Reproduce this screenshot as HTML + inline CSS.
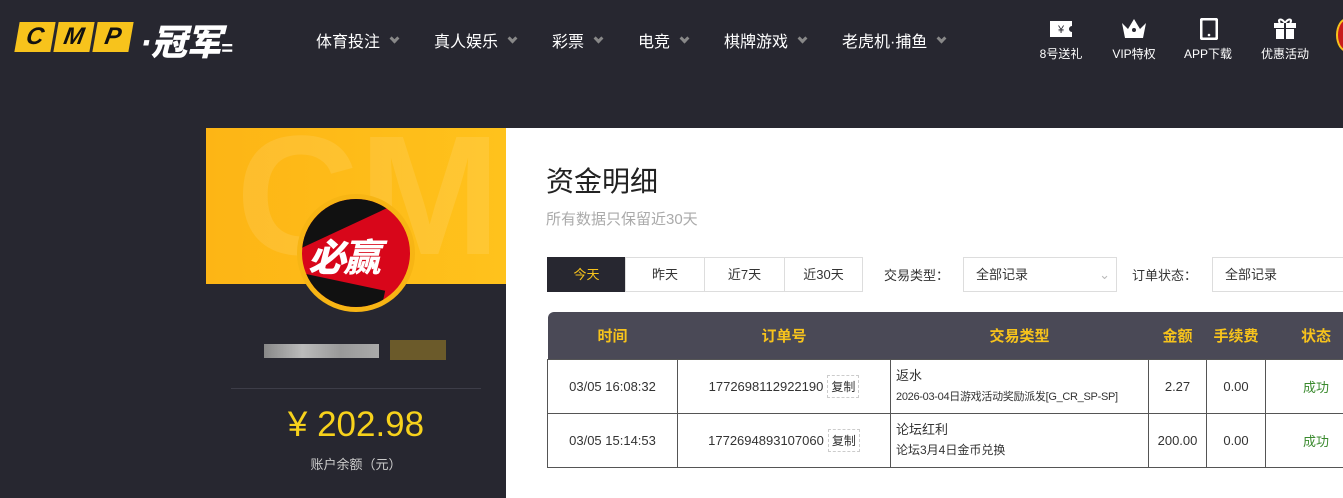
<!DOCTYPE html>
<html><head><meta charset="utf-8"><style>
*{margin:0;padding:0;box-sizing:border-box}
body{width:1343px;height:492px;overflow:hidden;background:#272730;font-family:"Liberation Sans","Noto Sans CJK SC",sans-serif;position:relative}
.abs{position:absolute}
.nav{color:#fff;font-size:16px;top:28px}
.nav i{display:inline-block;width:7px;height:7px;border-right:3px solid #888;border-bottom:3px solid #888;transform:rotate(45deg);margin-left:11px;vertical-align:5px}
.ic{color:#fff;font-size:12px;top:45px;width:70px;text-align:center}
.logo b{display:inline-block;width:36px;height:30px;background:#f7c31c;color:#111;font:italic 900 24px "Liberation Sans",sans-serif;text-align:center;line-height:30px;transform:skewX(-10deg);margin-right:3px}
.btn{top:257px;height:35px;border:1px solid #ddd;font-size:13px;text-align:center;line-height:33px;color:#333;background:#fff}
.sel{top:257px;height:35px;border:1px solid #ddd;font-size:13px;line-height:33px;padding-left:12px;color:#333}
table{border-collapse:collapse;position:absolute;left:547px;top:312px;width:820px;font-size:13px;color:#333;table-layout:fixed}
th{background:#4a4956;color:#f7c31c;font-size:15px;height:47px;font-weight:bold}
td{border:1px solid #555;height:54px;text-align:center;background:#fff;white-space:nowrap;overflow:hidden}
td.l{text-align:left;padding-left:5px;line-height:20px}
.cp{display:inline-block;border:1px dashed #ccc;padding:2px 3px;margin-left:4px;font-size:12px}
.ok{color:#3a8a2e}
</style></head><body>
<div class="abs logo" style="left:17px;top:22px"><b>C</b><b>M</b><b>P</b></div>
<div class="abs" style="left:140px;top:14px;color:#fff;font:italic 900 36px 'Liberation Sans','Noto Sans CJK SC',sans-serif;letter-spacing:-1px">·冠军<span style="font-size:20px">=</span></div>
<div class="abs nav" style="left:316px">体育投注<i></i></div>
<div class="abs nav" style="left:434px">真人娱乐<i></i></div>
<div class="abs nav" style="left:552px">彩票<i></i></div>
<div class="abs nav" style="left:638px">电竞<i></i></div>
<div class="abs nav" style="left:724px">棋牌游戏<i></i></div>
<div class="abs nav" style="left:842px">老虎机·捕鱼<i></i></div>
<svg class="abs" style="left:1050px;top:18px" width="22" height="20"><path d="M0 3h22v5a3 3 0 0 0 0 6v5H0z" fill="#fff"/><text x="11" y="15" font-size="11" text-anchor="middle" fill="#272730">¥</text></svg>
<svg class="abs" style="left:1121px;top:15px" width="26" height="24"><path d="M1 8l6 6 6-10 6 10 6-6-3 15H4z" fill="#fff"/><circle cx="13" cy="15" r="2" fill="#272730"/></svg>
<svg class="abs" style="left:1200px;top:18px" width="18" height="22"><rect x="1" y="1" width="16" height="20" rx="2" fill="none" stroke="#fff" stroke-width="3"/><circle cx="9" cy="17" r="1.3" fill="#fff"/></svg>
<svg class="abs" style="left:1273px;top:16px" width="24" height="24"><rect x="1" y="7" width="22" height="5" fill="#fff"/><rect x="3" y="13" width="18" height="10" fill="#fff"/><path d="M12 7C8 1 4 4 7 7M12 7c4-6 8-3 5 0" stroke="#fff" fill="none" stroke-width="2"/><rect x="11" y="7" width="2" height="16" fill="#272730"/></svg>
<div class="abs ic" style="left:1026px">8号送礼</div>
<div class="abs ic" style="left:1099px">VIP特权</div>
<div class="abs ic" style="left:1173px">APP下载</div>
<div class="abs ic" style="left:1250px">优惠活动</div>
<div class="abs" style="left:1336px;top:18px;width:22px;height:34px;border-radius:50%;background:#c81c1c;border:2px solid #f7c31c"></div>

<div class="abs" style="left:206px;top:128px;width:300px;height:370px;background:#272730"></div>
<div class="abs" style="left:206px;top:128px;width:300px;height:156px;background:linear-gradient(90deg,#fdb515,#ffc21c);overflow:hidden"><div style="font:bold 170px 'Liberation Sans';color:rgba(255,255,255,.1);margin:-30px 0 0 30px">CMP</div></div>
<div class="abs" style="left:297px;top:194px;width:118px;height:118px;border-radius:50%;background:#f7b514;padding:5px"><div style="width:108px;height:108px;border-radius:50%;background:#d8061a;position:relative;overflow:hidden"><div style="position:absolute;left:-20px;top:-40px;width:150px;height:60px;background:#111;transform:rotate(-25deg)"></div><div style="position:absolute;left:-10px;top:82px;width:90px;height:40px;background:#111;transform:rotate(12deg)"></div><div style="position:absolute;left:6px;top:28px;color:#fff;font:italic 900 38px 'Noto Sans CJK SC',sans-serif;letter-spacing:-3px">必赢</div></div></div>
<div class="abs" style="left:264px;top:344px;width:115px;height:14px;background:linear-gradient(90deg,#888,#bbb,#999,#aaa)"></div>
<div class="abs" style="left:390px;top:340px;width:56px;height:20px;background:#6b5a2a"></div>
<div class="abs" style="left:231px;top:388px;width:250px;height:1px;background:#3d3d48"></div>
<div class="abs" style="left:206px;top:405px;width:300px;text-align:center;color:#f7d21c;font-size:35px">¥ 202.98</div>
<div class="abs" style="left:206px;top:454px;width:300px;text-align:center;color:#ccc;font-size:13px">账户余额（元）</div>

<div class="abs" style="left:506px;top:128px;width:837px;height:370px;background:#fff"></div>
<div class="abs" style="left:546px;top:160px;font-size:28px;color:#222">资金明细</div>
<div class="abs" style="left:546px;top:208px;font-size:15px;color:#aaa">所有数据只保留近30天</div>
<div class="abs btn" style="left:547px;width:79px;background:#272730;color:#f7c31c;border-color:#272730">今天</div>
<div class="abs btn" style="left:625px;width:80px">昨天</div>
<div class="abs btn" style="left:704px;width:81px">近7天</div>
<div class="abs btn" style="left:784px;width:79px">近30天</div>
<div class="abs" style="left:884px;top:265px;font-size:13px;color:#333">交易类型：</div>
<div class="abs sel" style="left:963px;width:154px">全部记录<span style="float:right;margin-right:6px;color:#bbb">⌄</span></div>
<div class="abs" style="left:1132px;top:265px;font-size:13px;color:#333">订单状态：</div>
<div class="abs sel" style="left:1212px;width:150px">全部记录</div>
<table>
<colgroup><col style="width:130px"><col style="width:213px"><col style="width:258px"><col style="width:58px"><col style="width:59px"><col></colgroup>
<tr><th style="border-top-left-radius:6px">时间</th><th>订单号</th><th>交易类型</th><th>金额</th><th>手续费</th><th>状态</th></tr>
<tr><td>03/05 16:08:32</td><td>1772698112922190<span class="cp">复制</span></td><td class="l">返水<br><span style="font-size:11px;letter-spacing:-0.3px">2026-03-04日游戏活动奖励派发[G_CR_SP-SP]</span></td><td>2.27</td><td>0.00</td><td class="ok">成功</td></tr>
<tr><td>03/05 15:14:53</td><td>1772694893107060<span class="cp">复制</span></td><td class="l">论坛红利<br><span style="font-size:12px">论坛3月4日金币兑换</span></td><td>200.00</td><td>0.00</td><td class="ok">成功</td></tr>
</table>
</body></html>
